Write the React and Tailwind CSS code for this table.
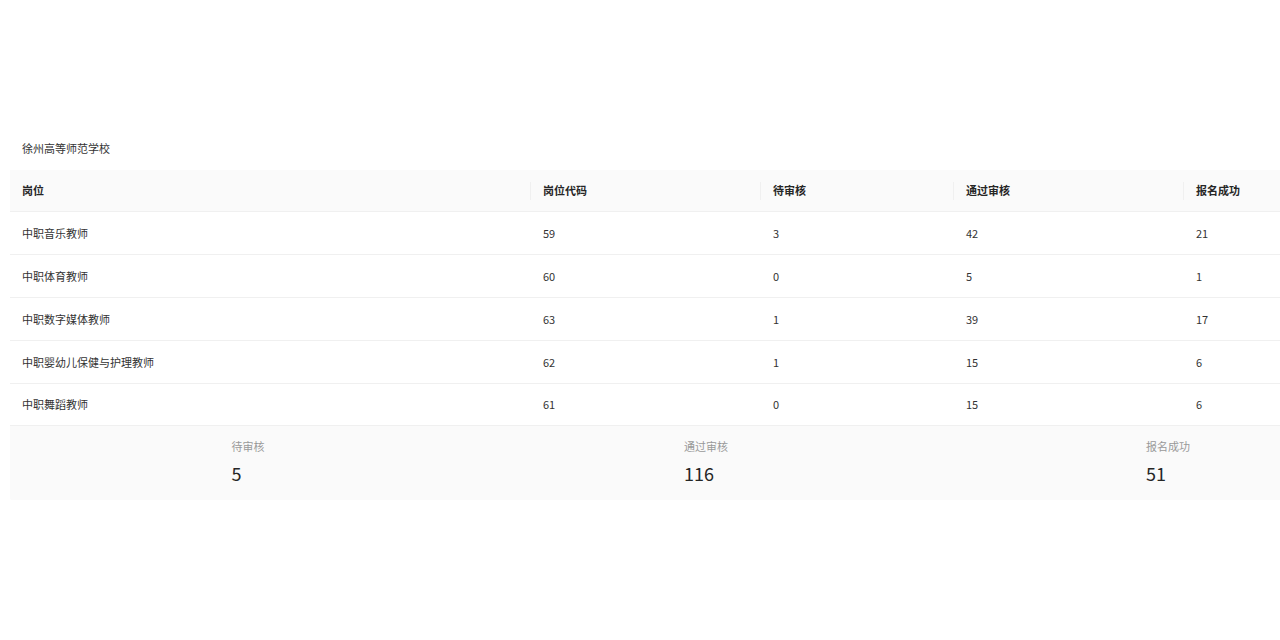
import React from "react";

const rows = [
  ["中职音乐教师", "59", "3", "42", "21"],
  ["中职体育教师", "60", "0", "5", "1"],
  ["中职数字媒体教师", "63", "1", "39", "17"],
  ["中职婴幼儿保健与护理教师", "62", "1", "15", "6"],
  ["中职舞蹈教师", "61", "0", "15", "6"],
];

const widths = ["w-[521px]", "w-[230px]", "w-[193px]", "w-[230px]", "w-[208px]"];
const heads = ["岗位", "岗位代码", "待审核", "通过审核", "报名成功"];

export default function App() {
  return (
    <div
      className="w-full h-[640px] overflow-hidden bg-white text-[#333]"
      style={{ fontFamily: '"Noto Sans CJK SC", "Noto Sans", sans-serif' }}
    >
      <div className="pt-[138px] pl-[10px] w-[1420px]">
        <div className="pl-[12px] h-[20px] leading-[20px] text-[11px] text-[#333]">徐州高等师范学校</div>
        <div className="mt-[12px] w-[1400px]">
          <div className="flex h-[42px] bg-[#fafafa] border-b border-[#f0f0f0]">
            {heads.map((h, i) => (
              <div key={i} className={`${widths[i]} shrink-0 relative flex items-center pl-[12px] text-[11px] font-bold text-[#262626]`}>
                {h}
                {i < 4 && (
                  <span className="absolute right-0 top-1/2 -translate-y-1/2 h-[18px] w-px bg-[#f0f0f0]" />
                )}
              </div>
            ))}
          </div>
          {rows.map((r, ri) => (
            <div key={ri} className={`flex ${ri === 4 ? "h-[42px]" : "h-[43px]"} border-b border-[#f0f0f0]`}>
              {r.map((c, ci) => (
                <div key={ci} className={`${widths[ci]} shrink-0 flex items-center pl-[12px] text-[11px] text-[#333]`}>
                  {c}
                </div>
              ))}
            </div>
          ))}
          <div className="flex h-[74px] bg-[#fafafa] rounded-b-[2px] items-start pt-[12px]">
            <div className="w-[476px] shrink-0 flex justify-center">
              <Stat label="待审核" value="5" />
            </div>
            <div className="w-[440px] shrink-0 flex justify-center">
              <Stat label="通过审核" value="116" />
            </div>
            <div className="w-[484px] shrink-0 flex justify-center">
              <Stat label="报名成功" value="51" />
            </div>
          </div>
        </div>
      </div>
    </div>
  );
}

function Stat({ label, value }) {
  return (
    <div className="flex flex-col items-start">
      <div className="text-[11px] leading-[16px] text-[#999]">{label}</div>
      <div className="mt-[6px] text-[18px] leading-[26px] text-[#262626]">{value}</div>
    </div>
  );
}
